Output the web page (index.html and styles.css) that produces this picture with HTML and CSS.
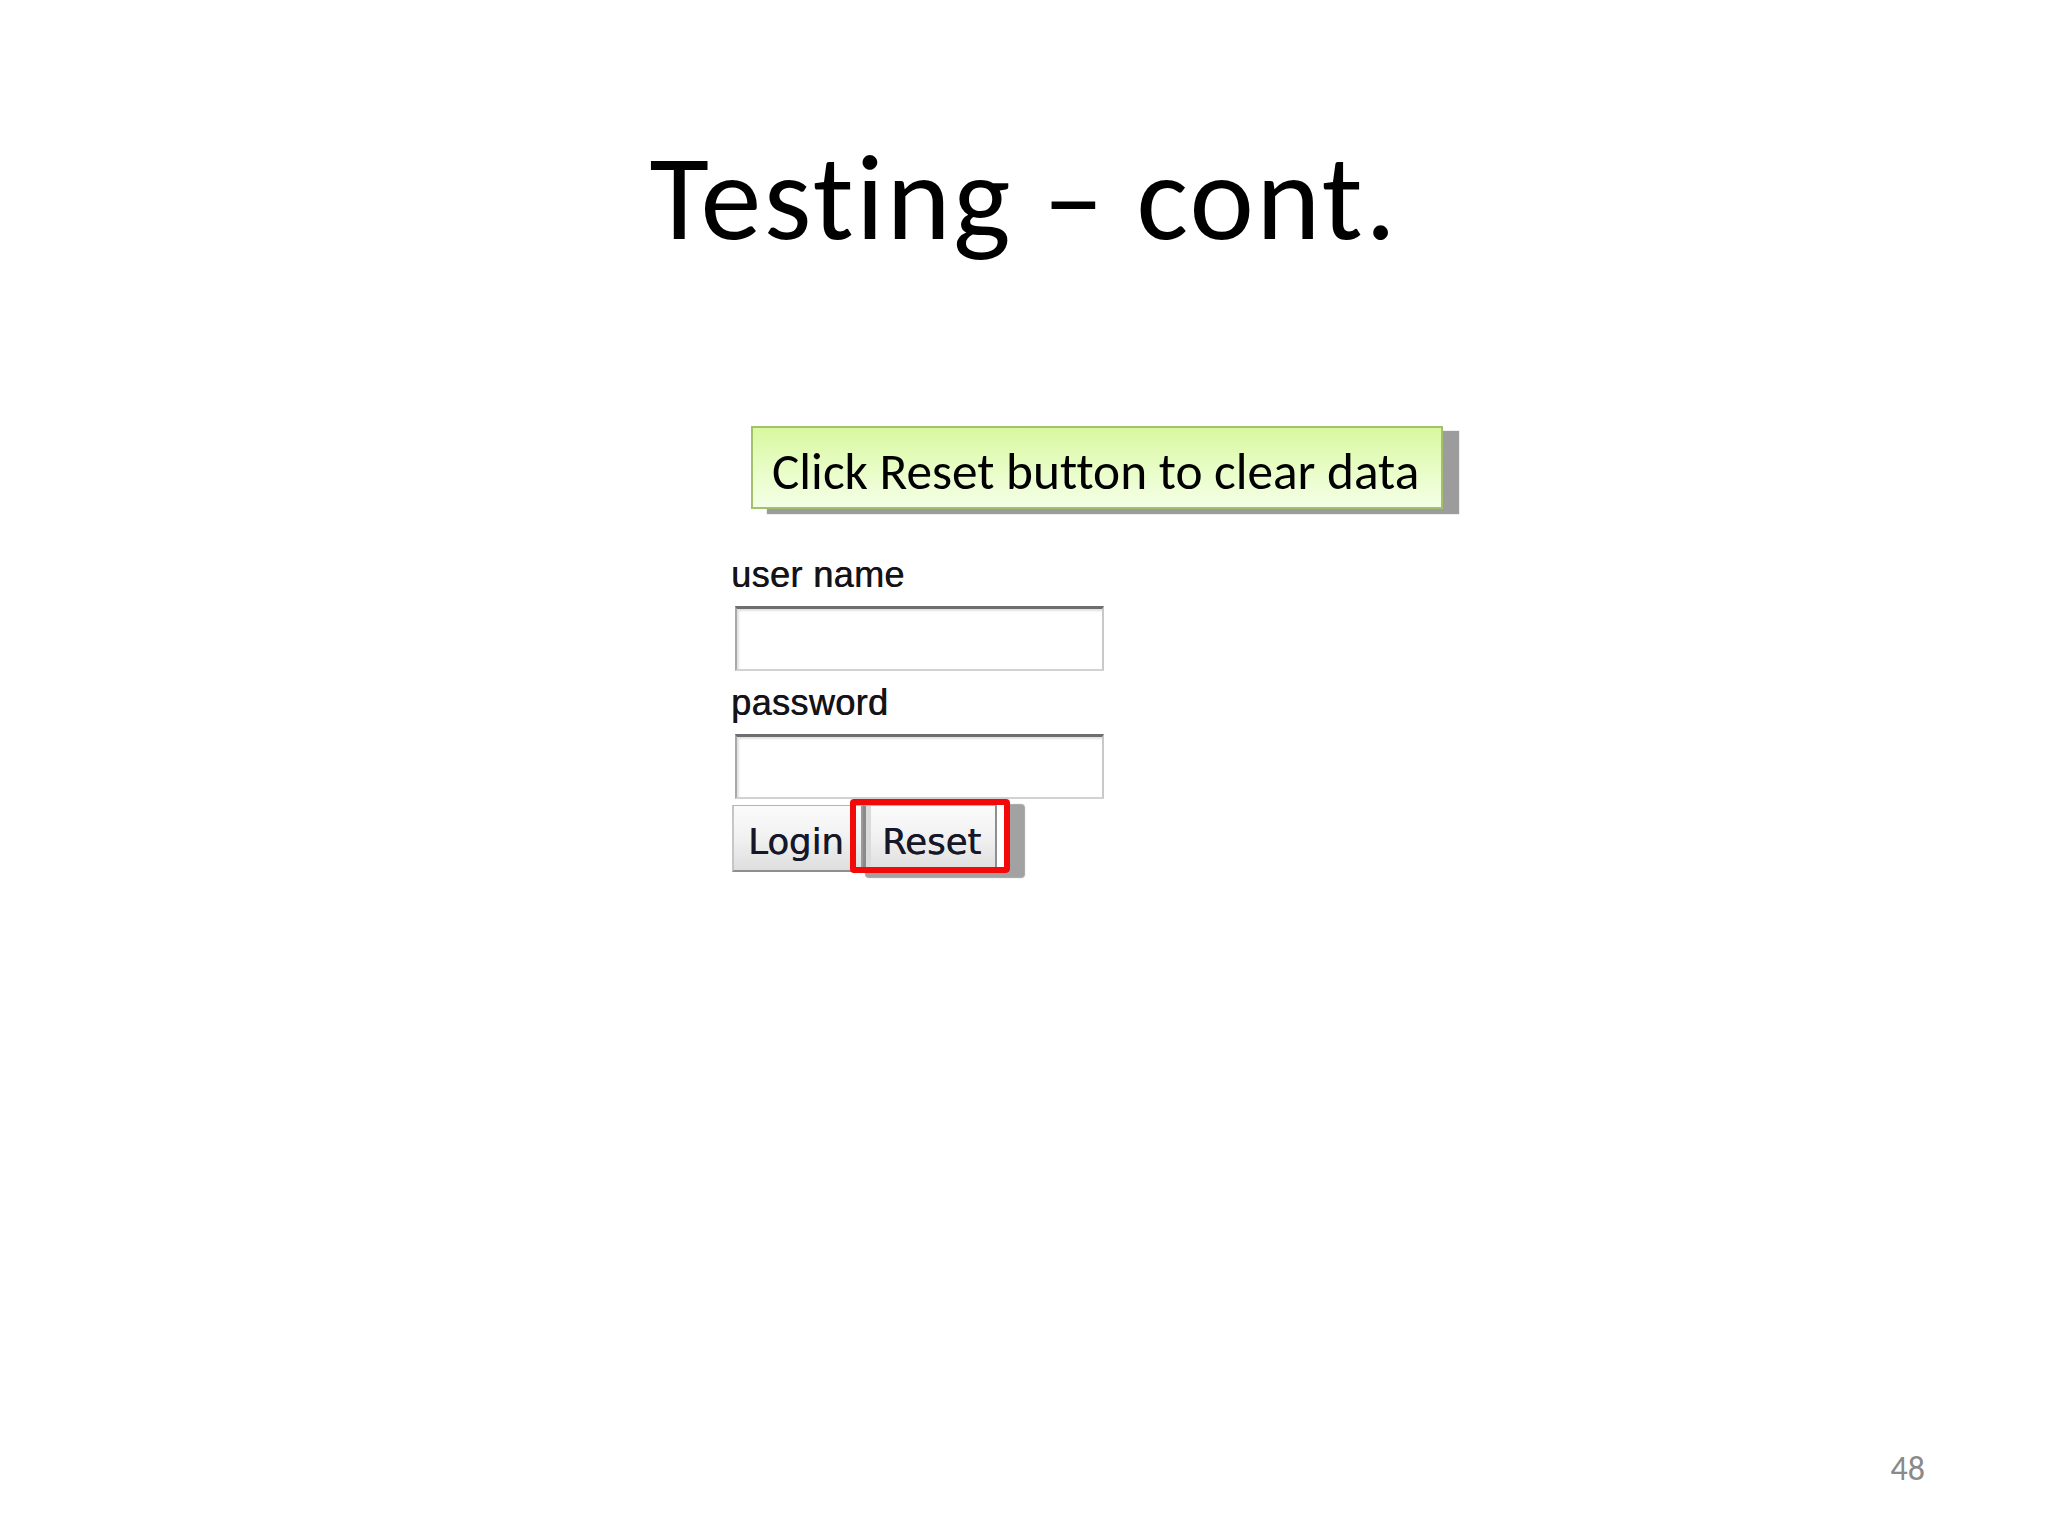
FILE: index.html
```html
<!DOCTYPE html>
<html lang="en">
<head>
<meta charset="utf-8">
<title>Testing – cont.</title>
<link rel="stylesheet" href="styles.css">
</head>
<body>
<div class="slide">
  <h1 class="title">Testing – cont.</h1>
  <div class="callout">Click Reset button to clear data</div>
  <div class="form">
    <div class="label">user name</div>
    <div class="input"></div>
    <div class="label label-second">password</div>
    <div class="input"></div>
    <div class="buttons">
      <div class="btn btn-login">Login</div>
      <div class="btn btn-reset">Reset</div>
      <div class="highlight"></div>
    </div>
  </div>
  <div class="page-number">48</div>
</div>
</body>
</html>
```

FILE: styles.css
```css
html, body {
  margin: 0;
  padding: 0;
  background: #ffffff;
}

.slide {
  width: 2048px;
  height: 1536px;
  display: flex;
  flex-direction: column;
  font-family: Carlito, Calibri, Lato, "Liberation Sans", sans-serif;
  font-variant-ligatures: none;
  color: #000000;
  overflow: hidden;
}

.title {
  margin: 0;
  padding-top: 123px;
  font-size: 122px;
  font-weight: normal;
  letter-spacing: 2.5px;
  line-height: 150px;
  height: 150px;
  text-align: center;
}

.callout {
  margin-top: 153px;
  margin-left: 751px;
  width: 692px;
  height: 83px;
  box-sizing: border-box;
  border: 2px solid #a3c168;
  background: linear-gradient(to bottom, #d8f8a0 0%, #e9fdc8 55%, #f4ffe6 100%);
  box-shadow: 16px 5px 1px #9c9c9c;
  padding: 13px 0 0 19px;
  font-size: 51.3px;
  line-height: 62px;
  white-space: nowrap;
}

.form {
  margin-top: 46px;
  margin-left: 731px;
  display: flex;
  flex-direction: column;
  align-items: flex-start;
}

.label {
  font-family: "Liberation Sans", Arial, sans-serif;
  font-size: 36px;
  line-height: 40px;
  height: 40px;
  color: #141418;
  letter-spacing: 0.4px;
  text-shadow: 0.6px 0 0 #141418;
}

.label-second {
  margin-top: 12px;
}

.input {
  margin-top: 11px;
  margin-left: 4px;
  width: 369px;
  height: 65px;
  box-sizing: border-box;
  background: #ffffff;
  border-top: 3px solid #6e6e6e;
  border-left: 2px solid #a9a9a9;
  border-right: 2px solid #c9c9c9;
  border-bottom: 2px solid #d2d2d2;
  box-shadow: inset 2px 2px 2px #e2e2e2;
}

.buttons {
  position: relative;
  margin-top: 6px;
  margin-left: 1px;
  display: flex;
  align-items: flex-start;
}

.btn {
  height: 67px;
  box-sizing: border-box;
  font-family: "DejaVu Sans", Verdana, sans-serif;
  font-size: 35.5px;
  line-height: 58px;
  padding-top: 7px;
  color: #16182a;
  text-shadow: 0.5px 0 0 #16182a;
  background: linear-gradient(to bottom, #fbfbfb 0%, #f1f1f1 50%, #dedede 100%);
  border: 1px solid #b4b4b4;
  border-bottom: 2px solid #8e8e8e;
  white-space: nowrap;
}

.btn-login {
  width: 131px;
  padding-left: 14px;
  border-left: 2px solid #c6c6c6;
  border-right: 2px solid #9a9a9a;
}

.btn-reset {
  width: 134px;
  padding-left: 16px;
  border-left: 3px solid #8a8a8a;
  border-right: 2px solid #8f8f8f;
  box-shadow: inset 5px 0 0 #dadada;
}

.highlight {
  position: absolute;
  left: 118px;
  top: -6px;
  width: 160px;
  height: 74px;
  box-sizing: border-box;
  border: 6px solid #f20a0a;
  border-radius: 4px;
  box-shadow: 15px 5px 1px #a2a2a2;
}

.page-number {
  margin-top: auto;
  padding-right: 123px;
  padding-bottom: 47px;
  text-align: right;
  font-size: 34px;
  line-height: 40px;
  color: #8a8a8a;
}
```
